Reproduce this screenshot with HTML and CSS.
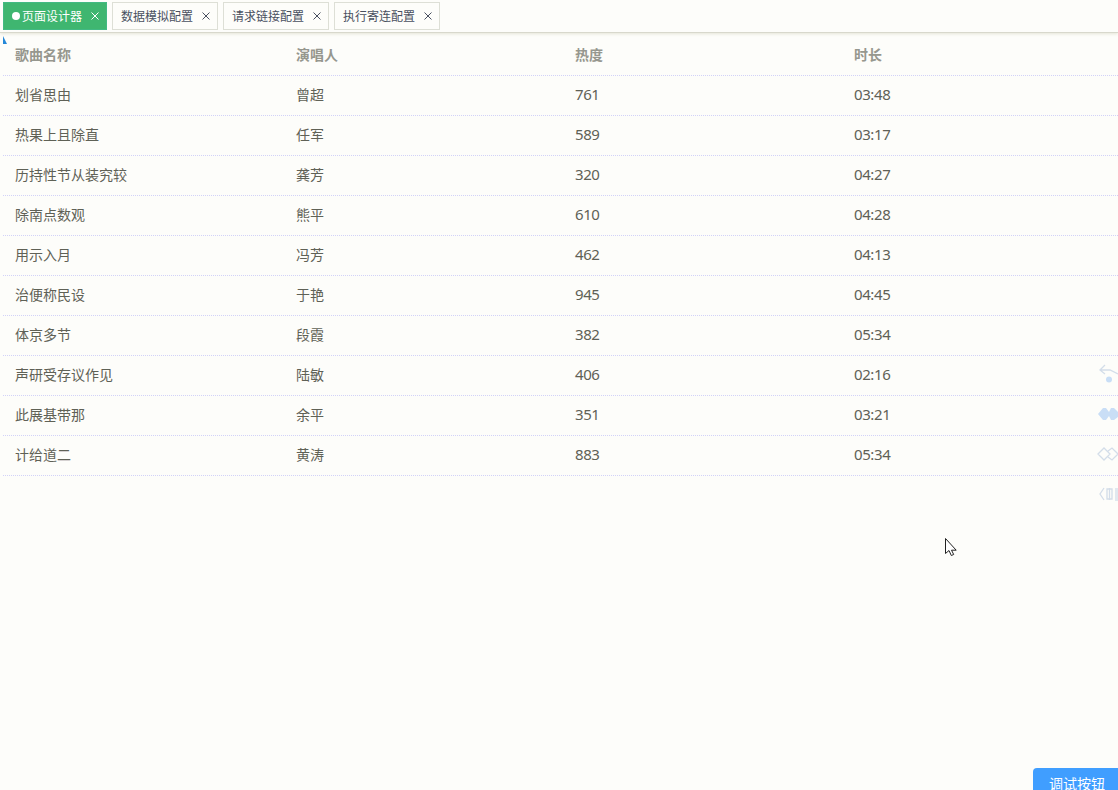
FILE: index.html
```html
<!DOCTYPE html>
<html lang="zh-CN">
<head>
<meta charset="utf-8">
<title>页面设计器</title>
<link rel="stylesheet" href="styles.css">
</head>
<body>
<nav class="tabs">
  <span class="tab active"><i class="dot"></i>页面设计器<svg class="close" viewBox="0 0 8 8"><path d="M.5.5l7 7M7.5.5l-7 7"/></svg></span>
  <span class="tab">数据模拟配置<svg class="close" viewBox="0 0 8 8"><path d="M.5.5l7 7M7.5.5l-7 7"/></svg></span>
  <span class="tab">请求链接配置<svg class="close" viewBox="0 0 8 8"><path d="M.5.5l7 7M7.5.5l-7 7"/></svg></span>
  <span class="tab">执行寄连配置<svg class="close" viewBox="0 0 8 8"><path d="M.5.5l7 7M7.5.5l-7 7"/></svg></span>
</nav>
<main class="table">
  <div class="row head"><span>歌曲名称</span><span>演唱人</span><span>热度</span><span>时长</span></div>
  <div class="row"><span>划省思由</span><span>曾超</span><span class="num">761</span><span class="num">03:48</span></div>
  <div class="row"><span>热果上且除直</span><span>任军</span><span class="num">589</span><span class="num">03:17</span></div>
  <div class="row"><span>历持性节从装究较</span><span>龚芳</span><span class="num">320</span><span class="num">04:27</span></div>
  <div class="row"><span>除南点数观</span><span>熊平</span><span class="num">610</span><span class="num">04:28</span></div>
  <div class="row"><span>用示入月</span><span>冯芳</span><span class="num">462</span><span class="num">04:13</span></div>
  <div class="row"><span>治便称民设</span><span>于艳</span><span class="num">945</span><span class="num">04:45</span></div>
  <div class="row"><span>体京多节</span><span>段霞</span><span class="num">382</span><span class="num">05:34</span></div>
  <div class="row"><span>声研受存议作见</span><span>陆敏</span><span class="num">406</span><span class="num">02:16</span></div>
  <div class="row"><span>此展基带那</span><span>余平</span><span class="num">351</span><span class="num">03:21</span></div>
  <div class="row"><span>计给道二</span><span>黄涛</span><span class="num">883</span><span class="num">05:34</span></div>
</main>
<svg class="corner" viewBox="0 0 4 8"><path d="M0 0L4 8H0z"/></svg>
<div class="tools">
  <svg viewBox="0 0 22 22"><path class="line" d="M9 2L4 7l5 4M4 7h10l8 4"/><circle cx="13" cy="16.5" r="3"/></svg>
  <svg viewBox="0 0 22 22"><path d="M2 11l5-6h3l3 4 2-4h3l4 4v5l-4 3h-3l-2-4-3 4H7z"/></svg>
  <svg viewBox="0 0 22 22"><path class="line" d="M2 11l6-6 6 6-6 6zM12 8l4-3 6 6-6 6-4-3"/></svg>
  <svg viewBox="0 0 22 22"><path class="line" d="M8 5l-4 6 4 6M11 6h5v10h-5zM13.500 5v12M20 5v13M22 5v13"/></svg>
</div>
<svg class="cursor" viewBox="0 0 14 20"><path d="M1.500 1.500v15l3.500-3 2.300 5 2.400-1-2.200-4.300h4.700z"/></svg>
<button class="debug">调试按钮</button>
</body>
</html>
```
FILE: styles.css
```css
* { box-sizing: border-box; }
body {
  margin: 0;
  height: 790px;
  position: relative;
  overflow: hidden;
  background: #fdfdfa;
  color: #5f6156;
  font: 14px "Noto Sans", "Noto Sans CJK SC", sans-serif;
}
.tabs {
  display: flex;
  gap: 5px;
  height: 33px;
  padding: 2px 3px 0;
  border-bottom: 1px solid #d8d8cc;
  box-shadow: 0 1px 3px rgba(120, 120, 60, .18);
}
.tab {
  display: flex;
  align-items: center;
  width: 106px;
  height: 28px;
  padding: 0 7px 1px 8px;
  border: 1px solid #dddfd6;
  color: #495060;
  font: 12px "Noto Sans CJK SC", sans-serif;
  white-space: nowrap;
}
.active {
  width: 104px;
  border-color: #42b983;
  background: #3fb670;
  color: #fff;
}
.dot {
  width: 8px;
  height: 8px;
  margin-right: 2px;
  border-radius: 50%;
  background: #fff;
}
.close {
  width: 8px;
  height: 8px;
  margin-left: auto;
  fill: none;
  stroke: currentColor;
}
.table { padding: 3px 0 0 3px; }
.row {
  display: grid;
  grid-template-columns: 281px 279px 279px 1fr;
  height: 40px;
  padding-left: 12px;
  border-bottom: 1px dotted #d2d2f8;
  line-height: 36px;
  font-family: "Noto Sans CJK SC", sans-serif;
}
.head {
  color: #96978e;
  font-weight: 700;
}
.num {
  font-family: "Noto Sans", sans-serif;
  font-size: 15px;
  line-height: 36px;
  letter-spacing: -.4px;
}
.corner {
  position: absolute;
  left: 3px;
  top: 36px;
  width: 4px;
  height: 8px;
  fill: #2588d8;
}
.tools {
  position: absolute;
  left: 1096px;
  top: 363px;
  display: grid;
  gap: 18px;
}
.tools svg {
  display: block;
  width: 22px;
  height: 22px;
  fill: #c9def6;
}
.tools .line {
  fill: none;
  stroke: #d3dde9;
  stroke-width: 1.3;
}
.cursor {
  position: absolute;
  left: 944px;
  top: 537px;
  width: 14px;
  height: 20px;
  fill: #fff;
  stroke: #222;
}
.debug {
  display: block;
  position: absolute;
  left: 1033px;
  top: 768px;
  width: 98px;
  height: 32px;
  padding: 0 0 2px 16px;
  border: 0;
  border-radius: 4px;
  background: #409eff;
  color: #fff;
  font: 14px "Noto Sans CJK SC", sans-serif;
  line-height: 30px;
  text-align: left;
}
```
